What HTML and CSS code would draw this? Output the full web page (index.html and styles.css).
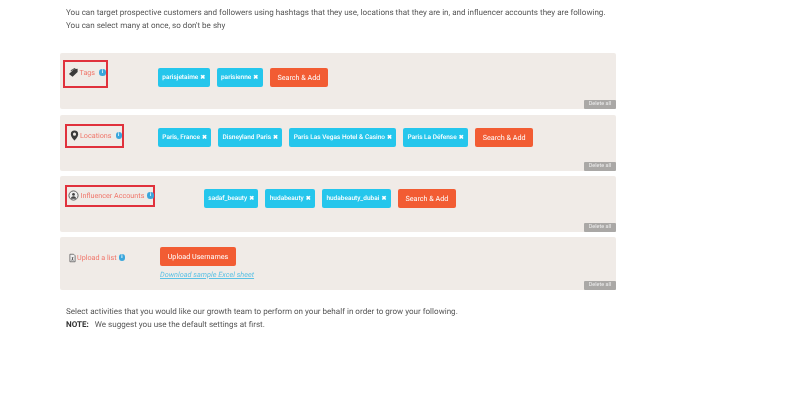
FILE: index.html
```html
<!DOCTYPE html>
<html lang="en">
<head>
<meta charset="utf-8">
<title>Targeting</title>
<link rel="stylesheet" href="styles.css">
</head>
<body>
<main class="page">
  <p class="intro">You can target prospective customers and followers using hashtags that they use, locations that they are in, and influencer accounts they are following.<br>You can select many at once, so don't be shy</p>

  <section class="panel panel-tags">
    <div class="label boxed box-tags">
      <svg class="icon" viewBox="0 0 12 12"><path d="M1 7.5 6.5 2.5 10.5 2 10.5 5.5 5 10.5Z" fill="#3a3a3a"/><path d="M3 3.5 7 1 8.5 1.5 3 5Z" fill="#555"/></svg>
      <span class="label-text">Tags</span><span class="info">i</span>
    </div>
    <div class="chips chips-tags">
      <span class="chip">parisjetaime <b class="x">✖</b></span>
      <span class="chip">parisienne <b class="x">✖</b></span>
      <span class="btn">Search &amp; Add</span>
    </div>
    <span class="delete">Delete all</span>
  </section>

  <section class="panel panel-loc">
    <div class="label boxed box-loc">
      <svg class="icon" viewBox="0 0 12 12"><path fill-rule="evenodd" d="M6 .5a4 4 0 0 1 4 4C10 7.5 6 11.5 6 11.5S2 7.5 2 4.5a4 4 0 0 1 4-4Zm0 2.3a1.7 1.7 0 1 0 0 3.4 1.7 1.7 0 0 0 0-3.4Z" fill="#3a3a3a"/></svg>
      <span class="label-text">Locations</span><span class="info">i</span>
    </div>
    <div class="chips chips-loc">
      <span class="chip">Paris, France <b class="x">✖</b></span>
      <span class="chip">Disneyland Paris <b class="x">✖</b></span>
      <span class="chip">Paris Las Vegas Hotel &amp; Casino <b class="x">✖</b></span>
      <span class="chip">Paris La Défense <b class="x">✖</b></span>
      <span class="btn">Search &amp; Add</span>
    </div>
    <span class="delete">Delete all</span>
  </section>

  <section class="panel panel-inf">
    <div class="label boxed box-inf">
      <svg class="icon" viewBox="0 0 12 12"><circle cx="6" cy="6" r="5" fill="#eee" stroke="#555" stroke-width="1"/><circle cx="6" cy="4.8" r="1.5" fill="#444"/><path d="M3.2 9.5a2.8 2.8 0 0 1 5.6 0Z" fill="#444"/></svg>
      <span class="label-text">Influencer Accounts</span><span class="info">i</span>
    </div>
    <div class="chips chips-inf">
      <span class="chip">sadaf_beauty <b class="x">✖</b></span>
      <span class="chip">hudabeauty <b class="x">✖</b></span>
      <span class="chip">hudabeauty_dubai <b class="x">✖</b></span>
      <span class="btn">Search &amp; Add</span>
    </div>
    <span class="delete">Delete all</span>
  </section>

  <section class="panel panel-upload">
    <div class="label label-upload">
      <svg class="icon icon-file" viewBox="0 0 12 12"><path d="M2.5 1h5l2 2v8h-7Z" fill="#eee" stroke="#555"/><path d="M5 5h2.4L6.4 7 7.6 9.5H6.4L5.9 8 5.2 9.5H4.4L5.4 7Z" fill="#555"/></svg>
      <span class="label-text">Upload a list</span><span class="info info-tight">i</span>
    </div>
    <div class="upload-col">
      <span class="btn btn-upload">Upload Usernames</span>
      <a class="sample" href="#">Download sample Excel sheet</a>
    </div>
    <span class="delete">Delete all</span>
  </section>

  <p class="outro">Select activities that you would like our growth team to perform on your behalf in order to grow your following.<br><strong>NOTE:</strong><span class="note-gap">We suggest you use the default settings at first.</span></p>
</main>
</body>
</html>
```
FILE: styles.css
```css
* { box-sizing: border-box; }
html, body { margin: 0; padding: 0; background: #fff; }
body {
  font-family: Roboto, "Liberation Sans", sans-serif;
  text-rendering: geometricPrecision;
  width: 800px;
  height: 420px;
  overflow: hidden;
  color: #555;
}
.page {
  width: 556px;
  margin-left: 60px;
  padding-top: 7px;
  filter: blur(0.35px);
}
.intro, .outro {
  margin: 0;
  padding-left: 6px;
  font-size: 8.07px;
  line-height: 12.5px;
  color: #555;
  white-space: nowrap;
}
.intro { margin-bottom: 21px; }
.outro { margin-top: 16px; }
.outro strong { color: #333; font-weight: 700; }
.note-gap { margin-left: 6px; }

.panel {
  position: relative;
  display: flex;
  align-items: flex-start;
  background: #f0ebe7;
  border-radius: 2px;
  height: 56px;
  margin-bottom: 5px;
}
.panel-tags { margin-bottom: 6px; }
.panel-upload { height: 53px; margin-bottom: 0; }

.label {
  display: flex;
  align-items: center;
  flex: none;
  font-size: 7.2px;
  color: #f0766b;
  white-space: nowrap;
}
.boxed { border: 2px solid #e0313c; }
.label-text { margin-left: 0.5px; }
.icon { width: 11px; height: 11px; flex: none; }
.icon-file { width: 9px; height: 10px; }
.info {
  width: 6.5px;
  height: 6.5px;
  margin-left: 4px;
  border-radius: 50%;
  background: #3aa6dc;
  color: #fff;
  font-size: 5px;
  line-height: 6.5px;
  text-align: center;
  font-weight: 700;
  flex: none;
}
.info-tight { margin-left: 2px; }

.box-tags { width: 45px; height: 28px; margin: 7px 0 0 3px; padding: 0 0 3px 3px; }
.box-loc { width: 59px; height: 24px; margin: 9px 0 0 5px; padding: 0 0 1px 1.5px; }
.box-inf { width: 90px; height: 22px; margin: 9px 0 0 5px; padding: 0 0 1px 1px; }
.box-inf .label-text { margin-left: 1.5px; }
.box-inf .info { margin-left: 3px; }
.label-upload { margin: 15px 0 0 8px; height: 11px; width: 64px; }
.label-upload .label-text { margin-left: 0; }

.chips { display: flex; align-items: center; gap: 7px; }
.chips-tags { margin: 15px 0 0 50px; }
.chips-loc { margin: 13px 0 0 34px; }
.chips-inf { margin: 13px 0 0 49px; }

.chip {
  display: inline-flex;
  align-items: center;
  height: 18.5px;
  padding: 0 4.3px;
  gap: 2px;
  border-radius: 2px;
  background: #25c6ec;
  color: #fff;
  font-size: 6.5px;
  font-weight: 500;
  white-space: nowrap;
}
.x { font-size: 6px; font-weight: 700; }
.btn {
  display: inline-flex;
  align-items: center;
  justify-content: center;
  width: 58.5px;
  height: 18.5px;
  border-radius: 2px;
  background: #f25c33;
  color: #fff;
  font-size: 7.2px;
  font-weight: 400;
  white-space: nowrap;
}
.upload-col {
  display: flex;
  flex-direction: column;
  align-items: flex-start;
  margin: 10px 0 0 28px;
}
.btn-upload { width: 76px; }
.sample {
  margin-top: 4px;
  font-size: 7.3px;
  font-style: italic;
  color: #5cc1e4;
  text-decoration: underline;
}
.delete {
  position: absolute;
  right: 0;
  bottom: 0;
  width: 32px;
  height: 9px;
  background: #aaa8a6;
  color: #eee;
  font-size: 5.5px;
  line-height: 9px;
  text-align: center;
  border-radius: 1px;
}
```
